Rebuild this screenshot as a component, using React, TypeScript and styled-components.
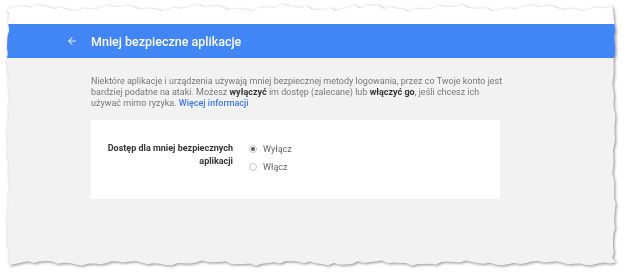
import React, { useState } from "react";
import styled, { createGlobalStyle } from "styled-components";

const GlobalStyle = createGlobalStyle`
  html, body {
    margin: 0;
    padding: 0;
    background: #ffffff;
  }
  body {
    font-family: Roboto, "Liberation Sans", Arial, sans-serif;
  }
`;

// wobbly offset 0..1 used for the torn paper edges
const wob = (i: number, s: number) =>
  (Math.sin(i * 1.7 + s) * 0.5 +
    Math.sin(i * 0.45 + s * 2) * 0.8 +
    Math.sin(i * 3.1 + s * 0.7) * 0.3 +
    1.6) /
  3.2;

const PAPER_W = 610;
const PAPER_H = 262;

function tornEdge() {
  const pts: string[] = [];
  const step = 6;
  // top, left -> right
  for (let x = 0; x <= PAPER_W; x += step) {
    pts.push(`${x}px ${(wob(x / step, 1.3) * 8).toFixed(1)}px`);
  }
  // right, top -> bottom
  for (let y = 8; y <= PAPER_H - 8; y += step) {
    pts.push(`${(PAPER_W - wob(y / step, 4.1) * 4).toFixed(1)}px ${y}px`);
  }
  // bottom, right -> left
  for (let x = PAPER_W; x >= 0; x -= step) {
    pts.push(`${x}px ${(PAPER_H - wob(x / step, 2.6) * 6).toFixed(1)}px`);
  }
  // left, bottom -> top
  for (let y = PAPER_H - 8; y >= 8; y -= step) {
    pts.push(`${(wob(y / step, 0.4) * 4).toFixed(1)}px ${y}px`);
  }
  return `polygon(${pts.join(", ")})`;
}

const Stage = styled.div`
  width: 630px;
  height: 276px;
  padding: 4px 0 0 6px;
  box-sizing: border-box;
  overflow: hidden;
`;

const Shadow = styled.div`
  width: ${PAPER_W}px;
  height: ${PAPER_H}px;
  filter: drop-shadow(1px 1px 1.5px rgba(0, 0, 0, 0.45));
`;

const Paper = styled.div<{ $edge: string }>`
  width: 100%;
  height: 100%;
  display: flex;
  flex-direction: column;
  background: #f2f2f2;
  clip-path: ${(p) => p.$edge};
`;

const TopStrip = styled.div`
  height: 20px;
  background: #ffffff;
  flex: none;
`;

const Header = styled.header`
  height: 34px;
  flex: none;
  background: #4285f4;
  display: flex;
  align-items: center;
  padding-left: 60px;
  gap: 13px;
  color: #ffffff;
`;

const BackButton = styled.span`
  display: flex;
  width: 12px;
  height: 12px;
  opacity: 0.85;
`;

const Title = styled.h1`
  margin: 0;
  font-size: 12.5px;
  font-weight: 500;
`;

const Body = styled.main`
  flex: 1;
  padding: 18px 0 0 85px;
`;

const Intro = styled.p`
  margin: 0 0 11px;
  width: 430px;
  white-space: nowrap;
  font-size: 9px;
  line-height: 11px;
  color: #777777;

  b {
    color: #333333;
    font-weight: 700;
  }
`;

const Link = styled.a`
  color: #3b78e7;
  text-decoration: none;
  font-weight: 500;
`;

const Card = styled.section`
  width: 409px;
  box-sizing: border-box;
  background: #ffffff;
  padding: 22px 22px 23px 12px;
  display: flex;
  gap: 16px;
`;

const Label = styled.div`
  flex: none;
  width: 130px;
  white-space: nowrap;
  text-align: right;
  font-size: 9px;
  line-height: 13px;
  font-weight: 700;
  color: #333333;
`;

const Options = styled.div`
  display: flex;
  flex-direction: column;
  margin-top: -2px;
`;

const Option = styled.label`
  display: flex;
  align-items: center;
  gap: 6px;
  height: 18px;
  font-size: 9px;
  color: #666666;
  cursor: pointer;
`;

const Dot = styled.span<{ $on: boolean }>`
  width: 8px;
  height: 8px;
  border-radius: 50%;
  border: 1px solid #c6c6c6;
  box-sizing: border-box;
  display: flex;
  align-items: center;
  justify-content: center;

  &::after {
    content: "";
    width: 4px;
    height: 4px;
    border-radius: 50%;
    background: ${(p) => (p.$on ? "#5f5f5f" : "transparent")};
  }
`;

const options = ["Wyłącz", "Włącz"];

export default function App() {
  const [choice, setChoice] = useState(0);
  const edge = tornEdge();

  return (
    <Stage>
      <GlobalStyle />
      <Shadow>
        <Paper $edge={edge}>
          <TopStrip />
          <Header>
            <BackButton>
              <svg viewBox="0 0 24 24" width="12" height="12" fill="currentColor">
                <path d="M20 11H7.83l5.59-5.59L12 4l-8 8 8 8 1.41-1.41L7.83 13H20v-2z" />
              </svg>
            </BackButton>
            <Title>Mniej bezpieczne aplikacje</Title>
          </Header>
          <Body>
            <Intro>
              Niektóre aplikacje i urządzenia używają mniej bezpiecznej metody logowania, przez co Twoje konto jest
              <br />
              bardziej podatne na ataki. Możesz <b>wyłączyć</b> im dostęp (zalecane) lub <b>włączyć go</b>, jeśli
              chcesz ich
              <br />
              używać mimo ryzyka. <Link href="#">Więcej informacji</Link>
            </Intro>
            <Card>
              <Label>
                Dostęp dla mniej bezpiecznych
                <br />
                aplikacji
              </Label>
              <Options>
                {options.map((o, i) => (
                  <Option key={o} onClick={() => setChoice(i)}>
                    <Dot $on={choice === i} />
                    {o}
                  </Option>
                ))}
              </Options>
            </Card>
          </Body>
        </Paper>
      </Shadow>
    </Stage>
  );
}
